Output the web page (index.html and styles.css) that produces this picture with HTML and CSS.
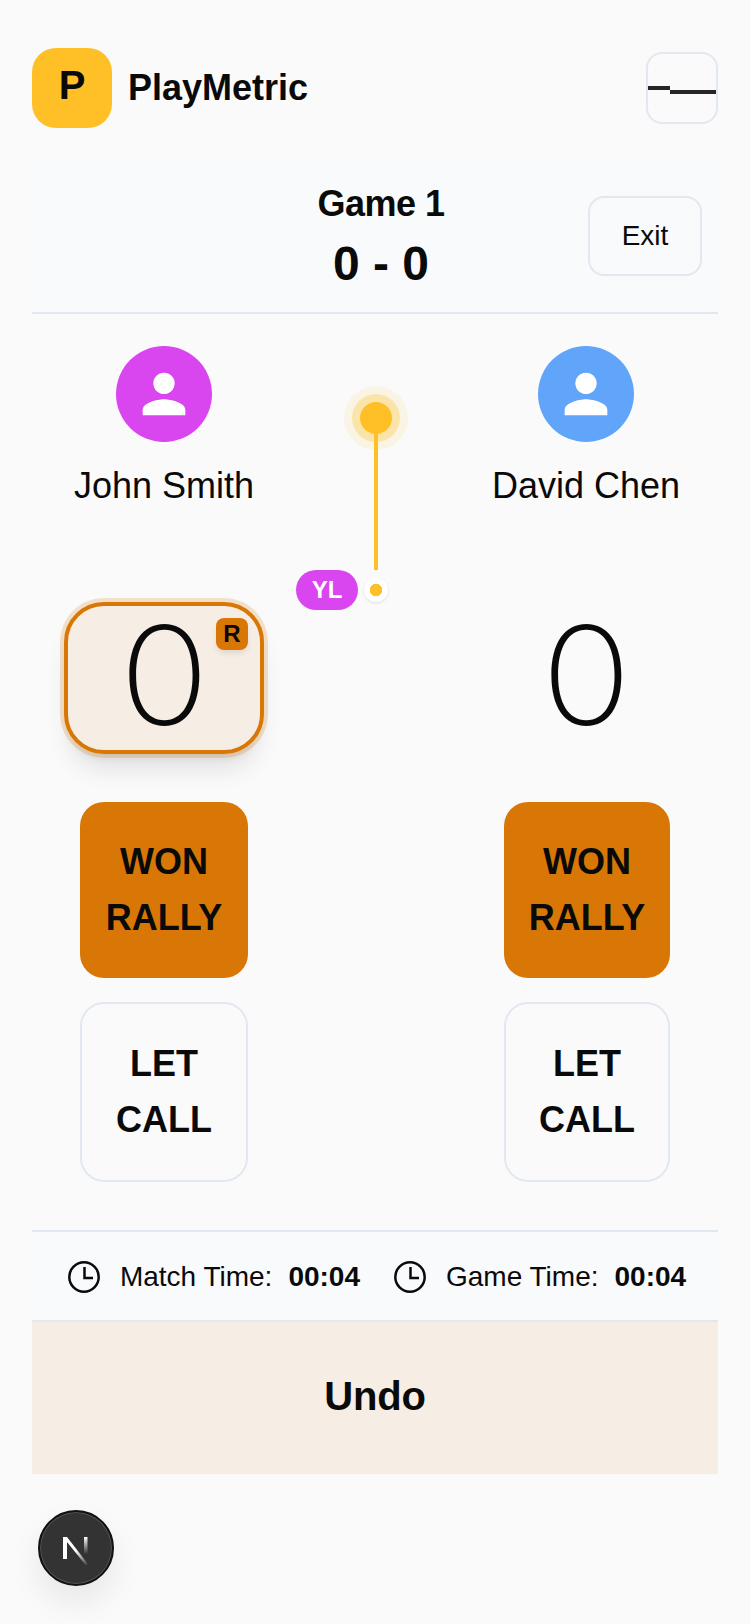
FILE: index.html
```html
<!DOCTYPE html>
<html lang="en">
<head>
<meta charset="utf-8">
<title>PlayMetric</title>
<link rel="stylesheet" href="styles.css">
</head>
<body>
<div class="app">
  <header class="topbar">
    <div class="brand"><div class="logo">P</div><span class="brand-name">PlayMetric</span></div>
    <button class="menu-btn" aria-label="Menu"><span class="bar bar-short"></span><span class="bar bar-long"></span></button>
  </header>
  <section class="game-head">
    <div class="game-info"><div class="game-title">Game 1</div><div class="game-score">0 - 0</div></div>
    <button class="exit-btn">Exit</button>
  </section>
  <section class="court">
    <div class="player">
      <div class="avatar avatar-pink"><svg viewBox="0 0 24 24" class="person"><circle cx="12" cy="8" r="4"/><path d="M12 14c-2.670 0-8 1.340-8 4v2h16v-2c0-2.660-5.330-4-8-4z"/></svg></div>
      <div class="name">John Smith</div>
      <div class="score score-active"><span class="digit">0</span><span class="r-badge">R</span></div>
      <button class="action action-won">WON<br>RALLY</button>
      <button class="action action-let">LET<br>CALL</button>
    </div>
    <div class="player player-right">
      <div class="avatar avatar-blue"><svg viewBox="0 0 24 24" class="person"><circle cx="12" cy="8" r="4"/><path d="M12 14c-2.670 0-8 1.340-8 4v2h16v-2c0-2.660-5.330-4-8-4z"/></svg></div>
      <div class="name">David Chen</div>
      <div class="score"><span class="digit">0</span></div>
      <button class="action action-won">WON<br>RALLY</button>
      <button class="action action-let">LET<br>CALL</button>
    </div>
    <div class="ball"></div>
    <div class="ball-line"></div>
    <div class="tag">YL</div>
    <div class="dot"></div>
  </section>
  <section class="timers">
    <div class="timer"><svg viewBox="0 0 32 32" class="clock"><circle cx="16" cy="16" r="14.700"/><path d="M16.500 6V17H25"/></svg><span class="timer-label">Match Time:</span><b class="timer-val">00:04</b></div>
    <div class="timer"><svg viewBox="0 0 32 32" class="clock"><circle cx="16" cy="16" r="14.700"/><path d="M16.500 6V17H25"/></svg><span class="timer-label">Game Time:</span><b class="timer-val">00:04</b></div>
  </section>
  <button class="undo">Undo</button>
</div>
<div class="next-badge"><svg viewBox="0 0 40 40" class="next-n"><defs><linearGradient id="g1" x1="0" y1="0" x2="1" y2="1"><stop offset="0.500" stop-color="#fff"/><stop offset="1" stop-color="#fff" stop-opacity="0"/></linearGradient><linearGradient id="g2" x1="0" y1="0" x2="0" y2="1"><stop offset="0" stop-color="#fff"/><stop offset="0.900" stop-color="#fff" stop-opacity="0"/></linearGradient></defs><path d="M7 9h4l21 27-2 1.500L11 14v17H7z" fill="url(#g1)"/><rect x="28" y="9" width="3.500" height="19" fill="url(#g2)"/></svg></div>
</body>
</html>
```
FILE: styles.css
```css
* { box-sizing: border-box; }
html, body { margin: 0; padding: 0; }
body { width: 750px; height: 1624px; background: #fafafa; color: #0a0a0a; font-family: "Liberation Sans", Arial, sans-serif; overflow: hidden; position: relative; }
button { font-family: inherit; color: inherit; cursor: pointer; }
.app { padding: 48px 32px 0; }
.topbar { display: flex; justify-content: space-between; align-items: center; height: 80px; }
.brand { display: flex; align-items: center; gap: 16px; }
.logo { width: 80px; height: 80px; border-radius: 24px; background: #fec026; display: flex; align-items: center; justify-content: center; font-size: 40px; font-weight: 700; padding-bottom: 6px; }
.brand-name { font-size: 36px; font-weight: 700; }
.menu-btn { width: 72px; height: 72px; padding: 0; border: 2px solid #e2e8f0; border-radius: 16px; background: transparent; display: flex; align-items: flex-start; }
.bar { display: block; background: #262626; height: 4px; }
.bar-short { width: 22px; margin-top: 32px; }
.bar-long { width: 46px; margin-top: 36px; }
.game-head { height: 154px; margin-top: 32px; background: #f8fafc; border-bottom: 2px solid #e2e8f0; position: relative; display: flex; justify-content: center; padding: 24px 0 0 12px; }
.game-info { text-align: center; }
.game-title { font-size: 36px; font-weight: 700; line-height: 40px; letter-spacing: -0.5px; }
.game-score { font-size: 48px; font-weight: 700; line-height: 56px; margin-top: 12px; }
.exit-btn { position: absolute; right: 16px; top: 36px; width: 114px; height: 80px; border: 2px solid #e2e8f0; border-radius: 16px; background: transparent; font-size: 28px; }
.court { position: relative; height: 916px; display: flex; justify-content: space-between; }
.player { width: 264px; display: flex; flex-direction: column; align-items: center; padding-top: 32px; }
.player-right .action { width: 166px; margin-left: 2px; }
.avatar { width: 96px; height: 96px; border-radius: 50%; display: flex; align-items: center; justify-content: center; }
.avatar-pink { background: #d946ef; }
.avatar-blue { background: #60a5fa; }
.person { width: 64px; height: 64px; fill: #fff; }
.name { font-size: 36px; line-height: 40px; margin-top: 24px; }
.score { position: relative; width: 200px; height: 152px; margin-top: 96px; border-radius: 40px; display: flex; align-items: center; justify-content: center; padding-bottom: 5px; }
.digit { font-family: Inter, sans-serif; font-weight: 250; font-size: 137px; line-height: 1; transform: scaleX(1.09); }
.score-active { background: #f6ede4; border: 4px solid #d97706; box-shadow: 0 0 0 4px rgba(217,119,6,.2), 0 20px 25px -5px rgba(0,0,0,.1), 0 8px 10px -6px rgba(0,0,0,.1); }
.r-badge { position: absolute; right: 12px; top: 12px; width: 32px; height: 32px; border-radius: 8px; background: #d97706; font-size: 24px; font-weight: 700; line-height: 32px; text-align: center; box-shadow: 0 4px 6px -1px rgba(0,0,0,.1); }
.action { width: 168px; border-radius: 24px; font-size: 36px; font-weight: 700; line-height: 56px; padding: 0; }
.action-won { height: 176px; margin-top: 48px; background: #d97706; border: 0; }
.action-let { height: 180px; margin-top: 24px; background: transparent; border: 2px solid #e2e8f0; }
.ball { position: absolute; left: 328px; top: 88px; width: 32px; height: 32px; border-radius: 50%; background: #fec026; box-shadow: 0 0 0 8px rgba(254,192,38,.3), 0 0 0 16px rgba(254,192,38,.1); }
.ball-line { position: absolute; left: 342px; top: 120px; width: 4px; height: 136px; background: #fec026; }
.tag { position: absolute; left: 264px; top: 256px; width: 62px; height: 40px; border-radius: 20px; background: #d946ef; color: #fff; font-size: 24px; font-weight: 700; line-height: 40px; text-align: center; }
.dot { position: absolute; left: 332px; top: 264px; width: 24px; height: 24px; border-radius: 50%; background: radial-gradient(circle, #fec026 0 6px, #fff 6.500px); box-shadow: 0 1px 3px rgba(0,0,0,.12); }
.timers { height: 92px; background: #f8fafc; border-top: 2px solid #e2e8f0; border-bottom: 2px solid #e2e8f0; display: flex; align-items: center; justify-content: center; gap: 34px; padding: 2px 0 0 4px; }
.timer { display: flex; align-items: center; font-size: 28px; }
.clock { width: 32px; height: 32px; fill: none; stroke: #0a0a0a; stroke-width: 2.500; margin-right: 20px; }
.timer-label { margin-right: 16px; }
.timer-val { font-weight: 700; }
.undo { display: block; width: 100%; height: 152px; border: 0; background: #f6ede4; font-size: 40px; font-weight: 700; letter-spacing: -0.2px; padding: 0 0 3px; }
.next-badge { position: absolute; left: 38px; top: 1510px; width: 76px; height: 76px; border-radius: 50%; background: #333; border: 2px solid #111; box-shadow: inset 0 0 0 1px #555, 0 16px 32px rgba(0,0,0,.08); display: flex; align-items: center; justify-content: center; }
.next-n { width: 40px; height: 40px; }
```
